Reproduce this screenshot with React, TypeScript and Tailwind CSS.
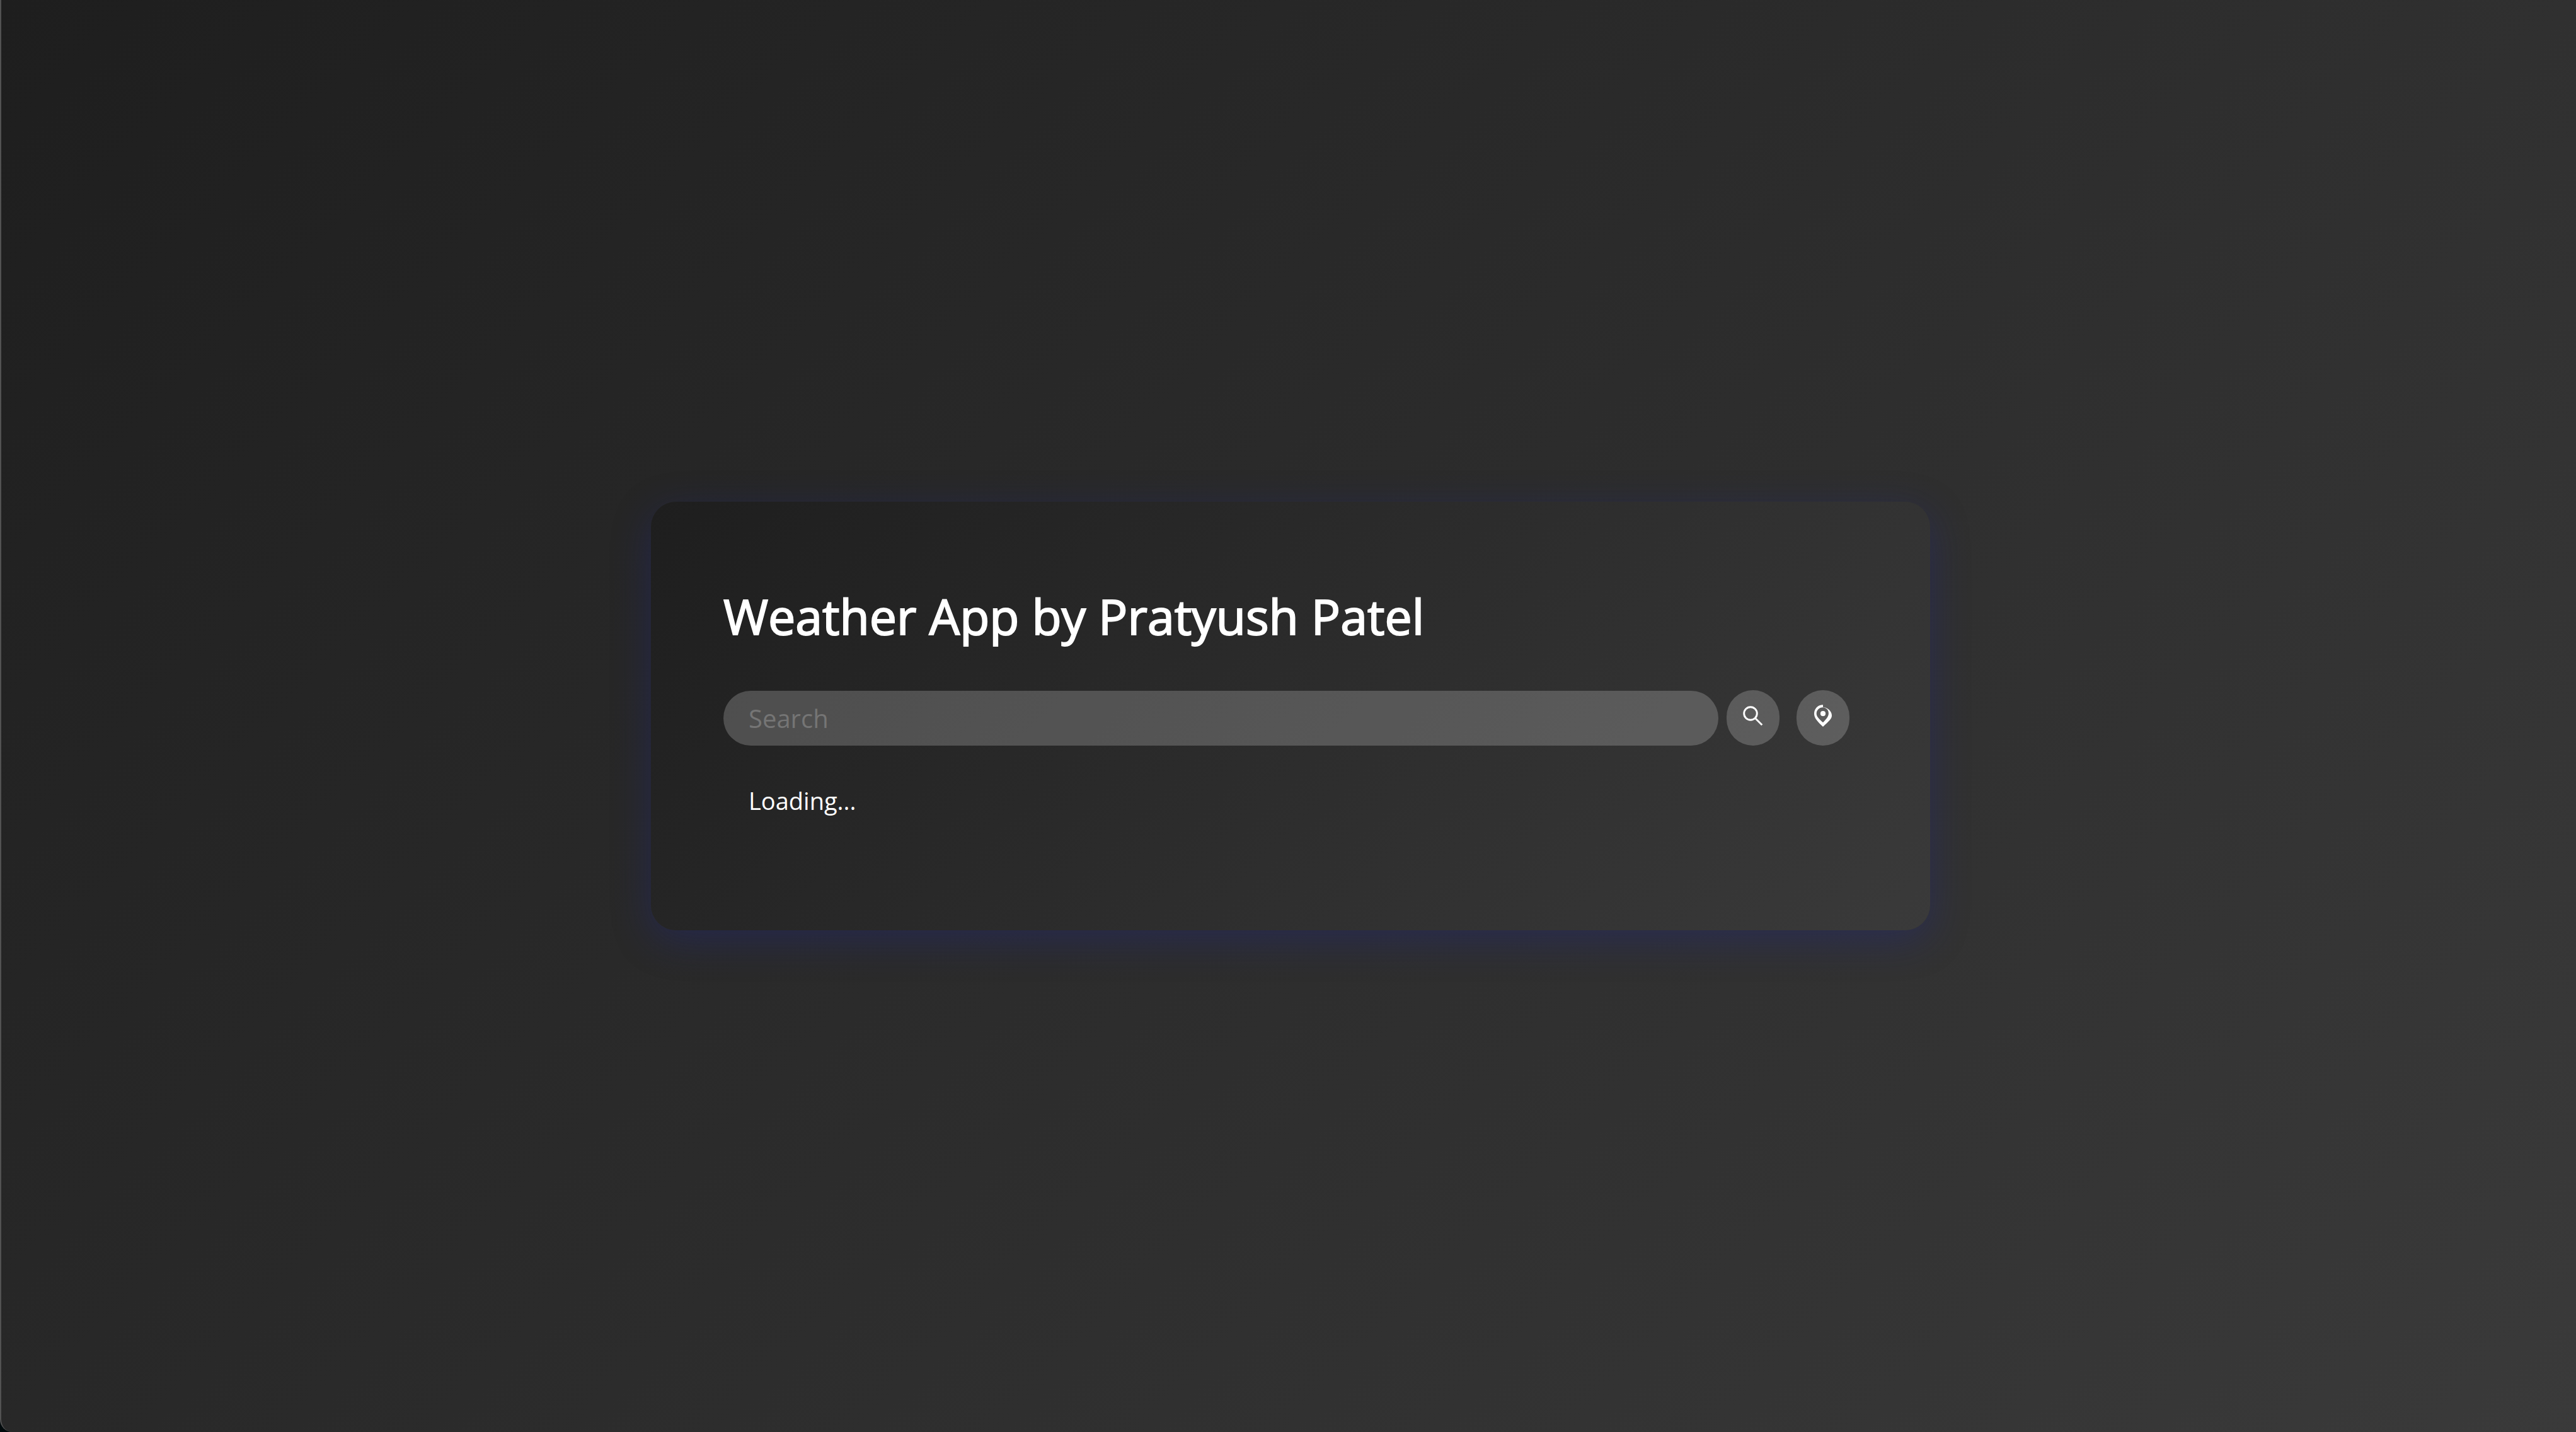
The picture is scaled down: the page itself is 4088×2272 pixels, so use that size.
import { useState } from "react";

function SearchIcon() {
  return (
    <svg viewBox="0 0 40 40" className="size-10" fill="none" stroke="currentColor" strokeWidth="2.9" aria-hidden="true">
      <circle cx="16" cy="15" r="10.3" />
      <path d="M23 22 34.300 33.300" />
    </svg>
  );
}

function PinIcon() {
  return (
    <svg viewBox="0 0 40 40" className="size-10" fill="currentColor" aria-hidden="true">
      <path
        fillRule="evenodd"
        d="M20 1.3C12 1.300 6 7.500 6 15.300C6 22.500 11 27.500 20 36C29 27.500 34 24 34 18.300C34 12.500 29.500 6.500 20 4.800ZM20 5.300C14 5.300 9.700 9.800 9.700 15.300C9.700 20 13.500 23.500 20 29.300C26.500 22.500 28.900 19.500 28.900 14.500C28.900 9.800 25.500 5.800 20 5.300Z"
      />
      <circle cx="20" cy="15.2" r="4.1" />
    </svg>
  );
}

const roundButton =
  "flex h-[88px] w-[84px] shrink-0 items-center justify-center rounded-full bg-white/20 pb-1 text-white";

export default function App() {
  const [query, setQuery] = useState("");
  return (
    <div className="min-h-screen bg-[#020a0c] font-['Open_Sans',sans-serif] text-white">
      <main className="flex min-h-screen items-center justify-center rounded-bl-[20px] border-l-2 border-[#525252] bg-linear-[135deg] from-[#1e1e1e] to-[#3a3a3a] pl-1.5">
        <section className="w-full max-w-[2030px] rounded-[40px] bg-linear-[135deg] from-[#1e1e1e] to-[#3a3a3a] pt-[126px] pr-[128px] pb-44 pl-[115px] shadow-[0_16px_60px_rgba(31,38,135,0.37)]">
          <h1 className="text-[77px] leading-[112px] [-webkit-text-stroke:2px_white]">Weather App by Pratyush Patel</h1>
          <form className="mt-[61px] flex items-center" onSubmit={(e) => e.preventDefault()}>
            <input
              type="text"
              aria-label="Search"
              placeholder="Search"
              value={query}
              onChange={(e) => setQuery(e.target.value)}
              className="h-[87px] min-w-0 flex-1 rounded-full bg-white/20 px-10 text-[40px] text-white outline-none placeholder:text-[#757575]"
            />
            <button type="submit" aria-label="Search city" className={`ml-[13px] ${roundButton}`}>
              <SearchIcon />
            </button>
            <button type="button" aria-label="Use my location" className={`ml-[27px] ${roundButton}`}>
              <PinIcon />
            </button>
          </form>
          <p className="mt-[57px] px-10 text-[38px] leading-[60px]">Loading...</p>
        </section>
      </main>
    </div>
  );
}
